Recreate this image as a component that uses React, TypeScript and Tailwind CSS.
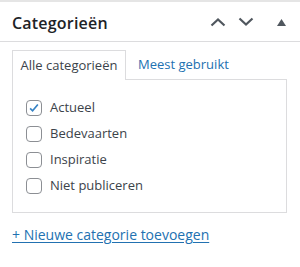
const items = [
  { name: 'Actueel', checked: true },
  { name: 'Bedevaarten', checked: false },
  { name: 'Inspiratie', checked: false },
  { name: 'Niet publiceren', checked: false },
];

const Checkbox = ({ checked }: { checked: boolean }) => (
  <span className="w-4 h-4 rounded-[4px] border border-[#8c8f94] bg-white flex items-center justify-center shrink-0">
    {checked && (
      <svg width="14" height="14" viewBox="0 0 20 20">
        <path d="M4.5 10.5 L8 14 L15.5 5" fill="none" stroke="#3582c4" strokeWidth="2.4" />
      </svg>
    )}
  </span>
);

const App = () => {
  return (
    <div
      className="w-[300px] h-[267px] bg-white border-t-2 border-[#e5e5e5] text-[#3c434a]"
      style={{ fontFamily: '"Open Sans", "Noto Sans", sans-serif' }}
    >
      <div className="h-[40px] border-b border-[#dcdcde] flex items-center pl-3 pr-3">
        <h2 className="flex-1 text-[16px] font-semibold tracking-[0.2px] text-[#1d2327] pt-[2px]">Categorieën</h2>
        <div className="flex items-center text-[#50575e] pt-[1px]">
          <span className="w-[28px] flex justify-center">
            <svg width="16" height="10" viewBox="0 0 16 10">
              <path d="M1.5 8.5 L8 2.5 L14.5 8.5" fill="none" stroke="currentColor" strokeWidth="2.2" />
            </svg>
          </span>
          <span className="w-[28px] flex justify-center">
            <svg width="16" height="10" viewBox="0 0 16 10">
              <path d="M1.5 1.5 L8 7.5 L14.5 1.5" fill="none" stroke="currentColor" strokeWidth="2.2" />
            </svg>
          </span>
          <span className="w-[28px] flex justify-end pr-[2px]">
            <svg width="9" height="7" viewBox="0 0 9 7">
              <path d="M0 7 L4.5 0 L9 7 Z" fill="currentColor" />
            </svg>
          </span>
        </div>
      </div>

      <div className="px-3 pt-2">
        <div className="flex items-end">
          <div className="w-[114px] h-[30px] border border-b-0 border-[#dcdcde] bg-white flex items-center justify-center text-[13px] -mb-px relative z-10">
            Alle categorieën
          </div>
          <div className="h-[29px] flex items-center pl-3 text-[13px] text-[#2271b1]">Meest gebruikt</div>
        </div>
        <div className="w-[275px] h-[134px] border border-[#dcdcde] pt-[20px] pl-[13px] flex flex-col gap-[10px]">
          {items.map((item) => (
            <label key={item.name} className="flex items-center gap-2 h-4 text-[13px]">
              <Checkbox checked={item.checked} />
              <span>{item.name}</span>
            </label>
          ))}
        </div>
        <a href="#" className="block mt-[12px] text-[14px] leading-5 font-medium text-[#2271b1] underline underline-offset-2">
          + Nieuwe categorie toevoegen
        </a>
      </div>
    </div>
  );
};

export default App;
